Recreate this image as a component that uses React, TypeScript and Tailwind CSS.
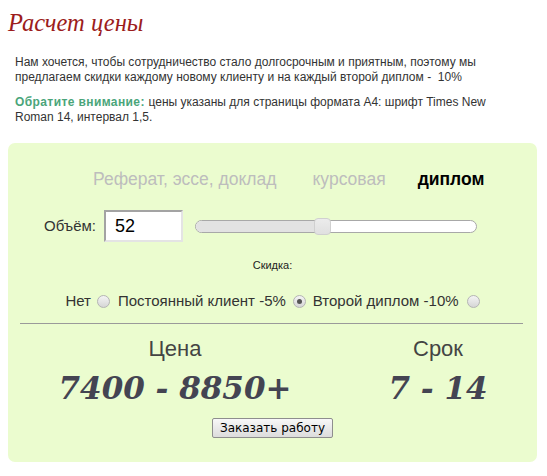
import React, { useState } from "react";

const tabs = ["Реферат, эссе, доклад", "курсовая", "диплом"];

const Radio = ({ checked }: { checked?: boolean }) => (
  <span className="inline-flex w-[13px] h-[13px] rounded-full border border-[#b4b4b4] bg-gradient-to-b from-[#f4f4f4] to-[#d6d6d6] items-center justify-center">
    {checked && <span className="w-[5px] h-[5px] rounded-full bg-[#555]" />}
  </span>
);

const App = () => {
  const [volume] = useState(52);
  const [tab] = useState(2);

  return (
    <div className="w-[547px] h-[476px] bg-white font-['Liberation_Sans',Arial,sans-serif] text-[#333]">
      <h1 className="pl-[8px] pt-[7px] text-[24.5px] leading-[31px] italic text-[#9c1c1c] font-['Liberation_Serif',serif]">
        Расчет цены
      </h1>

      <div className="pl-[15px] pr-[10px] mt-[17px] text-[12px] leading-[15px]">
        <p>
          Нам хочется, чтобы сотрудничество стало долгосрочным и приятным, поэтому мы
          <br />
          предлагаем скидки каждому новому клиенту и на каждый второй диплом - &nbsp;10%
        </p>
        <p className="mt-[10px]">
          <span className="font-bold text-[#4aa57a] tracking-[0.4px]">Обратите внимание: </span>
          цены указаны для страницы формата А4: шрифт Times New
          <br />
          Roman 14, интервал 1,5.
        </p>
      </div>

      {/* calculator panel */}
      <div className="ml-[8px] mt-[18px] w-[529px] h-[319px] rounded-[7px] bg-[#ebfccf] pt-[26px]">
        <div className="flex pl-[85px] text-[17.5px] leading-[20px]">
          {tabs.map((t, i) => (
            <span
              key={t}
              className={
                (i === 1 ? "ml-[36px] " : i === 2 ? "ml-[32px] " : "") +
                (i === tab ? "font-bold text-black" : "text-[#bdbdbd]")
              }
            >
              {t}
            </span>
          ))}
        </div>

        <div className="flex items-center mt-[21px] pl-[36px]">
          <span className="text-[15px] text-[#333]">Объём:</span>
          <div className="ml-[8px] w-[79px] h-[32px] bg-white border-2 border-t-[#a3a3a3] border-l-[#a3a3a3] border-b-[#e4e4e4] border-r-[#e4e4e4] pl-[9px] flex items-center text-[18px] text-black">
            {volume}
          </div>
          <div className="ml-[12px] relative w-[282px] h-[13px] rounded-full border border-[#a8a8a8] bg-white">
            <div className="h-full w-[125px] rounded-l-full bg-[#e2e2e2]" />
            <div className="absolute left-[118px] top-[-3px] w-[17px] h-[17px] rounded-[4px] border border-[#d0d0d0] bg-gradient-to-b from-[#ececec] to-[#e0e0e0]" />
          </div>
        </div>

        <div className="mt-[16px] text-center text-[11px] leading-[15px] text-[#222]">Скидка:</div>

        <div className="mt-[18px] flex items-center justify-center text-[15px] leading-[20px] text-[#333]">
          <span>Нет</span>
          <span className="ml-[6px] mr-[8px] flex"><Radio /></span>
          <span>Постоянный клиент -5%</span>
          <span className="ml-[7px] mr-[7px] flex"><Radio checked /></span>
          <span>Второй диплом -10%</span>
          <span className="ml-[8px] flex"><Radio /></span>
        </div>

        <div className="mt-[12px] ml-[12px] mr-[14px] h-px bg-[#9a9a9a]" />

        <div className="flex mt-[12px] text-[#444452]">
          <div className="w-[334px] text-center">
            <div className="text-[22px] leading-[26px] text-[#444]">Цена</div>
            <div className="mt-[6px] text-[31px] leading-[40px] font-bold italic font-['DejaVu_Serif',serif]">
              7400 - 8850+
            </div>
          </div>
          <div className="w-[192px] text-center">
            <div className="text-[22px] leading-[26px] text-[#444]">Срок</div>
            <div className="mt-[6px] text-[31px] leading-[40px] font-bold italic font-['DejaVu_Serif',serif]">
              7 - 14
            </div>
          </div>
        </div>

        <div className="mt-[10px] flex justify-center">
          <button className="h-[20px] px-[7px] rounded-[2px] border border-[#8e8e8e] bg-gradient-to-b from-[#f8f8f8] to-[#dcdcdc] text-[12px] leading-[16px] text-black font-['DejaVu_Sans',sans-serif]">
            Заказать работу
          </button>
        </div>
      </div>
    </div>
  );
};

export default App;
